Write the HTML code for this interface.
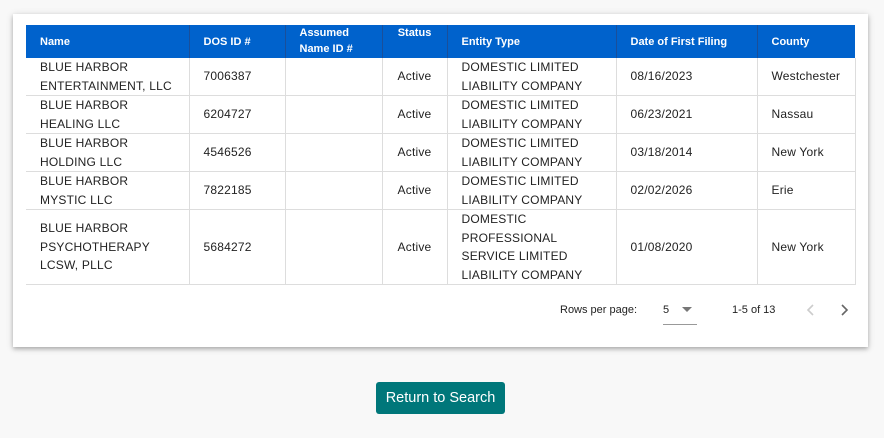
<!DOCTYPE html>
<html><head><style>
body{margin:0;width:884px;height:438px;background:#f8f8f8;font-family:"Liberation Sans",Arial,sans-serif;position:relative;overflow:hidden}
.card{position:absolute;left:13px;top:14px;width:855px;height:333px;background:#fff;box-shadow:0 2px 4px rgba(0,0,0,.25),0 1px 8px rgba(0,0,0,.12)}
table{position:absolute;left:26px;top:25px;border-collapse:collapse;table-layout:fixed;width:829px}
th{background:#0062cc;color:#fff;font-size:11px;font-weight:bold;text-align:left;height:33px;padding:0 0 0 14px;line-height:16px;border-left:1px solid #1a4f9a}
th:first-child{border-left:none}
td{font-size:12px;color:#222;line-height:18.5px;padding:0 0 0 14px;border-left:1px solid #ddd;border-bottom:1px solid #ddd;letter-spacing:.2px}
td:first-child{border-left:none}
td:last-child{border-right:1px solid #ddd}
tr.r td{height:37px}
.c{text-align:center;padding:0}
.btn{position:absolute;left:376px;top:382px;width:129px;height:32px;background:#00777a;border-radius:3px;color:#fff;font-size:14.5px;line-height:32px;text-align:center}
.f{position:absolute;font-size:11px;color:#222;top:304px}
</style></head><body>
<div class="card"></div>
<table>
<colgroup><col style="width:163px"><col style="width:96px"><col style="width:97px"><col style="width:65px"><col style="width:169px"><col style="width:141px"><col style="width:98px"></colgroup>
<tr><th>Name</th><th>DOS ID #</th><th style="vertical-align:top;padding-top:0">Assumed<br>Name ID #</th><th style="vertical-align:top;text-align:center;padding:0">Status</th><th>Entity Type</th><th>Date of First Filing</th><th>County</th></tr>
<tr class="r"><td>BLUE HARBOR<br>ENTERTAINMENT, LLC</td><td>7006387</td><td></td><td class="c">Active</td><td>DOMESTIC LIMITED<br>LIABILITY COMPANY</td><td>08/16/2023</td><td>Westchester</td></tr>
<tr class="r"><td>BLUE HARBOR<br>HEALING LLC</td><td>6204727</td><td></td><td class="c">Active</td><td>DOMESTIC LIMITED<br>LIABILITY COMPANY</td><td>06/23/2021</td><td>Nassau</td></tr>
<tr class="r"><td>BLUE HARBOR<br>HOLDING LLC</td><td>4546526</td><td></td><td class="c">Active</td><td>DOMESTIC LIMITED<br>LIABILITY COMPANY</td><td>03/18/2014</td><td>New York</td></tr>
<tr class="r"><td>BLUE HARBOR<br>MYSTIC LLC</td><td>7822185</td><td></td><td class="c">Active</td><td>DOMESTIC LIMITED<br>LIABILITY COMPANY</td><td>02/02/2026</td><td>Erie</td></tr>
<tr><td style="height:74px">BLUE HARBOR<br>PSYCHOTHERAPY<br>LCSW, PLLC</td><td>5684272</td><td></td><td class="c">Active</td><td>DOMESTIC<br>PROFESSIONAL<br>SERVICE LIMITED<br>LIABILITY COMPANY</td><td>01/08/2020</td><td>New York</td></tr>
</table>
<div class="f" style="left:560px">Rows per page:</div>
<div class="f" style="left:663px">5</div>
<svg style="position:absolute;left:682px;top:307px" width="10" height="6"><path d="M0 0h10L5 5z" fill="#777"/></svg>
<div style="position:absolute;left:663px;top:324px;width:34px;height:1px;background:#999"></div>
<div class="f" style="left:732px">1-5 of 13</div>
<svg style="position:absolute;left:806px;top:304px" width="10" height="12"><path d="M7 1L2 6l5 5" stroke="#ccc" stroke-width="1.6" fill="none"/></svg>
<svg style="position:absolute;left:839px;top:304px" width="10" height="12"><path d="M3 1l5 5-5 5" stroke="#666" stroke-width="1.6" fill="none"/></svg>
<div class="btn">Return to Search</div>
</body></html>
